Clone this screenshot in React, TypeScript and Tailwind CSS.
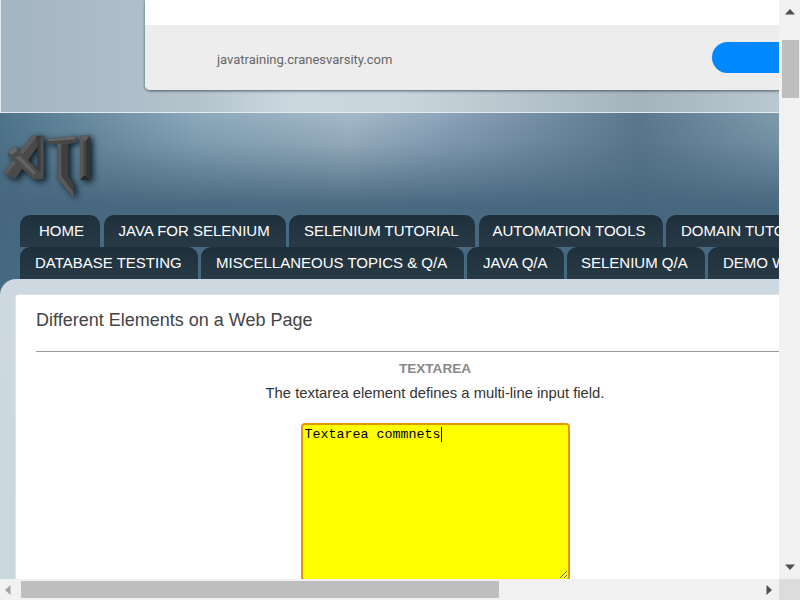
const row1 = [
  { label: "HOME", w: "w-[80px]", p: "pl-[19px]" },
  { label: "JAVA FOR SELENIUM", w: "w-[182px]", p: "pl-[15px]" },
  { label: "SELENIUM TUTORIAL", w: "w-[186px]", p: "pl-[15px]" },
  { label: "AUTOMATION TOOLS", w: "w-[184px]", p: "pl-[14px]" },
  { label: "DOMAIN TUTORIALS", w: "w-[180px]", p: "pl-[15px]" },
];
const row2 = [
  { label: "DATABASE TESTING", w: "w-[178px]", p: "pl-[15px]" },
  { label: "MISCELLANEOUS TOPICS & Q/A", w: "w-[263px]", p: "pl-[15px]" },
  { label: "JAVA Q/A", w: "w-[97px]", p: "pl-[16px]" },
  { label: "SELENIUM Q/A", w: "w-[138px]", p: "pl-[14px]" },
  { label: "DEMO WEBSITES", w: "w-[160px]", p: "pl-[15px]" },
];

function Tab({ label, w, p }: { label: string; w: string; p: string }) {
  return (
    <div className={`${w} ${p} h-8 shrink-0 overflow-hidden rounded-t-[10px] bg-[linear-gradient(to_bottom,#1f303d,#293a47)] flex items-center whitespace-nowrap text-[15px] text-white`}>
      {label}
    </div>
  );
}

function Logo() {
  return (
    <svg width="120" height="90" viewBox="0 0 360 270" className="drop-shadow-[3px_2px_3px_rgba(10,22,32,0.95)]" aria-label="ATI logo">
      <polygon points="95,47 112,47 118,72 45,178 10,160" fill="#4a4a4a" />
      <polygon points="95,47 112,47 100,62 22,162 10,160" fill="#5c5c5c" />
      <polygon points="108,47 130,47 130,178 100,178 112,150 112,80" fill="#3d3d3d" />
      <polygon points="122,52 130,47 130,178 122,168" fill="#505050" />
      <polygon points="100,178 130,178 122,168 108,168" fill="#2a2a2a" />
      <polygon points="25,95 45,80 122,160 130,178 100,178 25,108" fill="#4c4c4c" />
      <polygon points="25,95 45,80 52,92 34,104" fill="#686868" />
      <polygon points="45,110 60,108 108,158 100,165" fill="#626262" />
      <polygon points="140,58 232,48 232,66 205,72 172,72 140,72" fill="#474747" />
      <polygon points="140,58 232,48 222,58 150,64" fill="#666666" />
      <polygon points="172,72 205,72 205,170 222,195 220,232 172,175" fill="#3f3f3f" />
      <polygon points="172,72 184,72 184,168 220,215 220,232 172,175" fill="#5a5a5a" />
      <polygon points="240,47 270,47 270,180 240,180" fill="#444444" />
      <polygon points="240,47 270,47 258,62 250,62" fill="#5f5f5f" />
      <polygon points="258,62 270,47 270,180 258,168" fill="#333333" />
      <polygon points="240,180 270,180 258,168 250,168" fill="#272727" />
      <polygon points="240,47 250,62 250,168 240,180" fill="#585858" />
    </svg>
  );
}

export default function App() {
  return (
    <div className="w-[800px] h-[600px] overflow-hidden flex flex-col font-['Liberation_Sans',Arial,sans-serif]">
      <div className="flex h-[579px] shrink-0">
        <div className="w-[779px] shrink-0 overflow-hidden">
          <div className="h-[113px] border-b border-l border-[#e4eaee] pl-[144px] bg-[linear-gradient(to_right,#a3b5c1_0%,#b4c3cc_25%,#ccd8e0_38%,#c9d5dc_52%,#a4b3bd_82%,#bac8d0_100%)]">
            <div className="w-[700px] h-[90px] bg-white rounded-bl-[5px] overflow-hidden shadow-[0_1px_3px_rgba(40,50,60,0.75)]">
              <div className="h-[25px]" />
              <div className="h-[65px] bg-[#ededed] flex items-center pl-[72px] font-['Roboto',sans-serif]">
                <span className="w-[495px] shrink-0 pt-[4px] text-[13px] text-[#666]">javatraining.cranesvarsity.com</span>
                <span className="w-[120px] h-[31px] -mt-[1px] shrink-0 rounded-l-full bg-[#0088ff]" />
              </div>
            </div>
          </div>
          <div className="h-[166px] flex flex-col bg-[linear-gradient(to_bottom,rgba(70,102,125,0)_0%,rgba(70,102,125,0.2)_18%,rgba(70,102,125,0.95)_55%,#466a80_100%),linear-gradient(to_right,#4d7389_0%,#8ba8bb_25%,#a5b9c8_45%,#8fa6bc_56%,#5b778c_82%,#7e9aad_100%)]">
            <div className="h-[102px] pt-[7px] overflow-hidden">
              <Logo />
            </div>
            <div className="pl-5 flex gap-[3.5px]">
              {row1.map((t) => <Tab key={t.label} {...t} />)}
            </div>
            <div className="pl-5 flex gap-[3px]">
              {row2.map((t) => <Tab key={t.label} {...t} />)}
            </div>
          </div>
          <div className="h-[300px] bg-[#466a80]">
            <div className="h-full rounded-tl-[16px] pl-[15px] pt-[15px] bg-[linear-gradient(to_bottom,#cdd8e0,#cbd7df)]">
              <div className="w-[800px] h-full bg-white border-l border-t border-[#dfe5e9] rounded-tl-[3px] pl-5">
                <div className="w-[798px]">
                  <h1 className="pt-[15px] h-[57px] text-[18px] leading-[21px] font-normal text-[#444] border-b border-[#999]">
                    Different Elements on a Web Page
                  </h1>
                  <div className="text-center pt-[9px]">
                    <div className="text-[13.6px] leading-4 font-bold text-[#888]">TEXTAREA</div>
                    <p className="mt-[8px] text-[14.8px] leading-4 text-[#333]">The textarea element defines a multi-line input field.</p>
                    <div className="relative w-[269px] h-[158px] mx-auto mt-[22px]">
                      <textarea
                        readOnly
                        defaultValue="Textarea commnets"
                        className="block w-full h-full bg-[#ffff00] border-2 border-[#e59700] rounded-[4px] p-[2px] outline-none text-[13.333px] leading-[15px] text-black font-['Liberation_Mono',monospace] resize"
                      />
                      <span className="absolute left-[140px] top-[4px] w-px h-[15px] bg-black" />
                    </div>
                  </div>
                </div>
              </div>
            </div>
          </div>
        </div>
        <div className="w-[21px] shrink-0 bg-[#f1f1f1] flex flex-col items-center relative">
          <svg width="10" height="6" viewBox="0 0 10 6" className="mt-[9px]"><path d="M5 0l5 5.5H0z" fill="#505050" /></svg>
          <div className="w-[17px] h-[58px] mt-[25px] ml-px bg-[#bebebe]" />
          <svg width="10" height="6" viewBox="0 0 10 6" className="mt-auto mb-[9px]"><path d="M5 6L0 .5h10z" fill="#505050" /></svg>
        </div>
      </div>
      <div className="flex h-[21px] shrink-0 bg-[#f1f1f1]">
        <div className="w-[21px] shrink-0 flex items-center justify-center pr-[5px]">
          <svg width="6" height="10" viewBox="0 0 6 10"><path d="M0 5l5.5-5v10z" fill="#a3a3a3" /></svg>
        </div>
        <div className="w-[478px] h-[17px] mt-[2px] shrink-0 bg-[#bebebe]" />
        <div className="flex-1 flex items-center justify-end pr-[7px]">
          <svg width="6" height="10" viewBox="0 0 6 10"><path d="M6 5L.5 0v10z" fill="#505050" /></svg>
        </div>
        <div className="w-[21px] shrink-0 bg-[#dcdcdc]" />
      </div>
    </div>
  );
}
